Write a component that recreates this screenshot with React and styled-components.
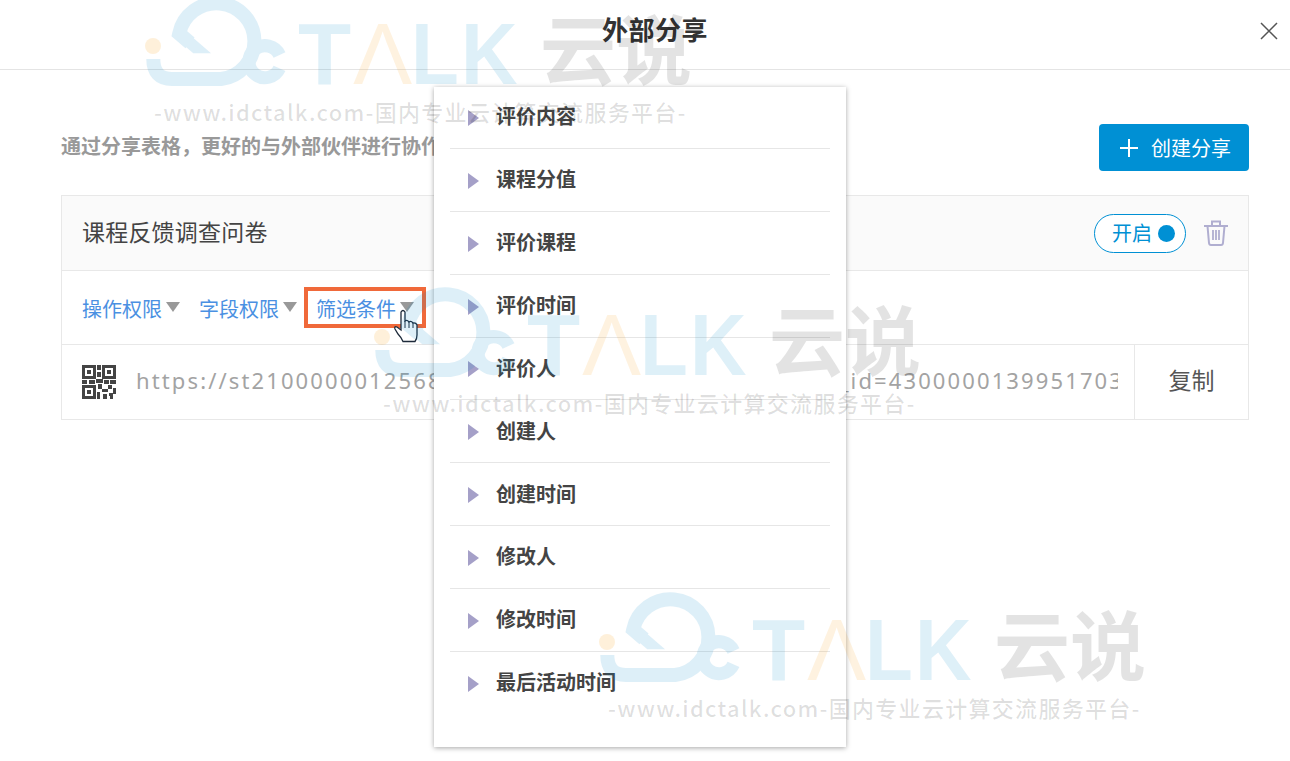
import React from "react";
import styled, {createGlobalStyle} from "styled-components";

const menuItems = ["评价内容", "课程分值", "评价课程", "评价时间", "评价人", "创建人", "创建时间", "修改人", "修改时间", "最后活动时间"];
const tabs = ["操作权限", "字段权限"];
const marks = [{x: 136, y: -16}, {x: 365, y: 275}, {x: 590, y: 580}];

const Global = createGlobalStyle`
  html, body {
    margin: 0;
    padding: 0;
    background: #fff;
  }
  body {
    font-family: "Noto Sans CJK SC", "Noto Sans", sans-serif;
  }
`;

const Page = styled.div`
  position: relative;
  width: 1290px;
  height: 761px;
  overflow: hidden;
  background: #fff;
`;

const Header = styled.header`
  height: 69px;
  display: flex;
  align-items: center;
  justify-content: center;
  border-bottom: 1px solid #e4e4e4;
  position: relative;
`;

const Title = styled.h1`
  margin: -12px 0 0 20px;
  font-size: 26px;
  font-weight: 700;
  letter-spacing: .5px;
  color: #333;
  line-height: 1;
`;

const Close = styled.button`
  position: absolute;
  top: 21px;
  right: 11px;
  width: 20px;
  height: 20px;
  padding: 0;
  border: 0;
  background: none;
  color: #555;
  svg {
    display: block;
  }
`;

const Body = styled.main`
  padding: 54px 41px 0 61px;
`;

const TopRow = styled.div`
  display: flex;
  align-items: center;
  justify-content: space-between;
  height: 47px;
  margin-bottom: 24px;
`;

const Desc = styled.p`
  margin: -4px 0 0;
  font-size: 20px;
  font-weight: 700;
  color: #999;
`;

const CreateBtn = styled.button`
  width: 150px;
  height: 47px;
  display: flex;
  align-items: center;
  gap: 12px;
  padding: 0 0 0 20px;
  border: 0;
  border-radius: 4px;
  background: #0090d4;
  color: #fff;
  font-family: inherit;
  font-size: 20px;
`;

const Card = styled.section`
  border: 1px solid #e8e8e8;
`;

const CardHead = styled.div`
  height: 74px;
  display: flex;
  align-items: center;
  justify-content: space-between;
  padding: 0 20px;
  background: #fafafa;
  border-bottom: 1px solid #e8e8e8;
`;

const CardTitle = styled.div`
  margin-top: -5px;
  font-size: 23px;
  color: #444;
  letter-spacing: .2px;
`;

const HeadActions = styled.div`
  display: flex;
  align-items: center;
  gap: 18px;
`;

const Toggle = styled.div`
  width: 92px;
  height: 39px;
  box-sizing: border-box;
  display: flex;
  align-items: center;
  gap: 6px;
  padding: 0 0 2px 17px;
  border: 1px solid #0090d4;
  border-radius: 20px;
  background: #fff;
  color: #0090d4;
  font-size: 20px;
`;

const Dot = styled.span`
  width: 17px;
  height: 17px;
  margin-top: 2px;
  border-radius: 50%;
  background: #0090d4;
`;

const Tabs = styled.div`
  height: 71px;
  display: flex;
  align-items: center;
  padding: 2px 0 0 20px;
  gap: 19px;
  border-bottom: 1px solid #e8e8e8;
`;

const Tab = styled.div`
  position: relative;
  display: flex;
  align-items: center;
  gap: 4px;
  font-size: 20px;
  color: #4a90e2;
`;

const Caret = styled.span`
  width: 0;
  height: 0;
  margin-top: -4px;
  border-left: 7.5px solid transparent;
  border-right: 7.5px solid transparent;
  border-top: 10px solid #999;
`;

const Marked = styled(Tab)`
  &::after {
    content: "";
    position: absolute;
    left: -12px;
    right: -12px;
    top: -7px;
    bottom: -5px;
    border: 4px solid #f0693a;
  }
`;

const Hand = styled.svg`
  position: absolute;
  left: 78px;
  top: 15px;
  z-index: 1;
`;

const LinkRow = styled.div`
  height: 74px;
  display: flex;
  align-items: center;
  padding-left: 20px;
`;

const Qr = styled.svg`
  flex: none;
  margin-right: 20px;
`;

const Url = styled.div`
  flex: 1;
  min-width: 0;
  margin-top: -4px;
  overflow: hidden;
  white-space: nowrap;
  font-family: "Noto Sans", sans-serif;
  font-size: 22px;
  letter-spacing: 2.12px;
  color: #a3a3a3;
`;

const Copy = styled.div`
  flex: none;
  box-sizing: border-box;
  width: 114px;
  height: 74px;
  margin-left: 16px;
  padding-bottom: 6px;
  display: flex;
  align-items: center;
  justify-content: center;
  border-left: 1px solid #e8e8e8;
  font-size: 23px;
  color: #555;
`;

const Menu = styled.ul`
  position: absolute;
  left: 434px;
  top: 87px;
  width: 412px;
  height: 660px;
  box-sizing: border-box;
  margin: 0;
  padding: 0 16px;
  list-style: none;
  background: #fff;
  box-shadow: 0 1px 5px rgba(0, 0, 0, .35);
`;

const MenuItem = styled.li`
  box-sizing: border-box;
  height: ${({$first}) => ($first ? 62 : 62.85)}px;
  display: flex;
  align-items: center;
  gap: 17px;
  padding: 0 0 ${({$first}) => ($first ? 4 : 2)}px 18px;
  border-bottom: 1px solid ${({$last}) => ($last ? "transparent" : "#e6e6e6")};
  font-size: 20px;
  font-weight: 700;
  color: #444;
`;

const Arrow = styled.span`
  width: 0;
  height: 0;
  margin-top: 4px;
  border-top: 8px solid transparent;
  border-bottom: 8px solid transparent;
  border-left: 11px solid #a5a0c8;
`;

const Mark = styled.div`
  position: absolute;
  left: ${({$x}) => $x}px;
  top: ${({$y}) => $y}px;
  width: 570px;
  pointer-events: none;
  z-index: 10;
`;

const MarkTop = styled.div`
  height: 112px;
  display: flex;
  align-items: flex-start;
`;

const MarkLetters = styled.div`
  margin: 26px 0 0 12px;
  display: flex;
  font-family: "Liberation Sans", sans-serif;
  font-weight: 700;
  font-size: 87px;
  line-height: 1;
  color: rgba(0, 136, 204, .13);
`;

const Letter = styled.span`
  display: block;
  width: ${({$w}) => $w}px;
  transform: scaleX(${({$sx}) => $sx || 1});
  transform-origin: left center;
`;

const WarmLetter = styled(Letter)`
  font-weight: 400;
  color: rgba(250, 170, 50, .15);
`;

const MarkCn = styled.div`
  margin: 24px 0 0 24px;
  font-size: 76px;
  font-weight: 700;
  line-height: 1;
  color: rgba(0, 0, 0, .11);
`;

const MarkLine = styled.div`
  margin: 0 0 0 18px;
  font-size: 22px;
  font-weight: 500;
  line-height: 30px;
  letter-spacing: 1.3px;
  white-space: nowrap;
  color: rgba(0, 0, 0, .13);
`;

const Logo = () => (
    <svg width="152" height="112" viewBox="0 0 152 112" fill="none" style={{flex: "none", marginRight: -2, overflow: "visible"}}>
        <g opacity=".13">
            <path d="M36 51L57.300 69.300H75L50.700 48.300Z" fill="#0088cc"/>
            <path d="M54 58.800L43.200 49.600A38 38 0 1 1 85 95L36 95Q17.300 95 17.300 75" stroke="#0088cc" strokeWidth="14"/>
            <path d="M143.500 71A16 16 0 1 0 143.500 84.400" stroke="#0088cc" strokeWidth="13"/>
        </g>
        <circle cx="17" cy="62" r="8" fill="rgba(250,170,50,.18)"/>
    </svg>
);

const Watermark = ({x, y}) => (
    <Mark $x={x} $y={y}>
        <MarkTop>
            <Logo/>
            <MarkLetters>
                <Letter $w={55}>T</Letter>
                <WarmLetter $w={58} $sx={1.02}>Λ</WarmLetter>
                <Letter $w={50} $sx={.9}>L</Letter>
                <Letter $w={55} $sx={.9}>K</Letter>
            </MarkLetters>
            <MarkCn>云说</MarkCn>
        </MarkTop>
        <MarkLine>-www.idctalk.com-国内专业云计算交流服务平台-</MarkLine>
    </Mark>
);

const QrIcon = () => (
    <Qr width="34" height="34" viewBox="0 0 34 34" fill="#444">
        <path fillRule="evenodd" d="M0 0h14v14H0zM3 3v8h8V3zM20 0h14v14H20zM23 3v8h8V3zM0 20h14v14H0zM3 23v8h8v-8z"/>
        <path d="M5 5h4v4H5zM25 5h4v4h-4zM5 25h4v4H5zM15 0h4v5h-4zM15 7h4v5h-4zM14 14h7v4h-7zM0 15h5v4H0zM7 15h6v4H7zM22 15h5v4h-5zM28 15h6v4h-6zM16 19h4v5h-4zM26 20h4v4h-4zM20 24h6v3h-6zM31 23h3v6h-3zM15 27h3v7h-3zM21 29h4v5h-4zM27 28h4v3h-4zM28 31h3v3h-3z"/>
    </Qr>
);

const TrashIcon = () => (
    <svg width="24" height="26" viewBox="0 0 24 26" fill="none" stroke="#b0aed0" strokeWidth="2">
        <path d="M0 6h24"/>
        <path d="M8 5V1.500h8V5"/>
        <path d="M3.500 6l1.500 17q.2 2 2 2h10q1.800 0 2-2l1.500-17"/>
        <path d="M9 10v10M12 10v10M15 10v10" strokeWidth="1.800"/>
    </svg>
);

const HandCursor = () => (
    <Hand width="24" height="34" viewBox="0 0 24 34">
        <path d="M7 3Q9 0 11 3L11 12Q13 10.500 15 13Q17 11.500 19 14Q22 13.500 23 16L23 26Q23 30 21 32.500L9 32.500Q7 28 4 25L1 20Q0 17 3 18L7 21Z" fill="#fff" stroke="#1d2a3a" strokeWidth="1.300"/>
        <path d="M11 12v7M15 13v6M19 14v5" stroke="#1d2a3a" strokeWidth="1" fill="none"/>
    </Hand>
);

const App = () => {
    return (
        <Page>
            <Global/>
            <Header>
                <Title>外部分享</Title>
                <Close aria-label="close">
                    <svg width="20" height="20" viewBox="0 0 20 20" stroke="currentColor" strokeWidth="1.500">
                        <path d="M2 2l16 16M18 2L2 18"/>
                    </svg>
                </Close>
            </Header>
            <Body>
                <TopRow>
                    <Desc>通过分享表格，更好的与外部伙伴进行协作</Desc>
                    <CreateBtn>
                        <svg width="20" height="20" viewBox="0 0 20 20" stroke="#fff" strokeWidth="2">
                            <path d="M10 1v18M1 10h18"/>
                        </svg>
                        创建分享
                    </CreateBtn>
                </TopRow>
                <Card>
                    <CardHead>
                        <CardTitle>课程反馈调查问卷</CardTitle>
                        <HeadActions>
                            <Toggle>开启<Dot/></Toggle>
                            <TrashIcon/>
                        </HeadActions>
                    </CardHead>
                    <Tabs>
                        {tabs.map((tab) => (
                            <Tab key={tab}>{tab}<Caret/></Tab>
                        ))}
                        <Marked>
                            筛选条件<Caret/>
                            <HandCursor/>
                        </Marked>
                    </Tabs>
                    <LinkRow>
                        <QrIcon/>
                        <Url>https://st2100000012568.huoban.com/t/21000000125680_id=4300000139951703</Url>
                        <Copy>复制</Copy>
                    </LinkRow>
                </Card>
            </Body>
            <Menu>
                {menuItems.map((item, index) => (
                    <MenuItem key={item} $first={index === 0} $last={index === menuItems.length - 1}>
                        <Arrow/>
                        {item}
                    </MenuItem>
                ))}
            </Menu>
            {marks.map((mark) => (
                <Watermark key={mark.x} x={mark.x} y={mark.y}/>
            ))}
        </Page>
    );
}

export default App;
